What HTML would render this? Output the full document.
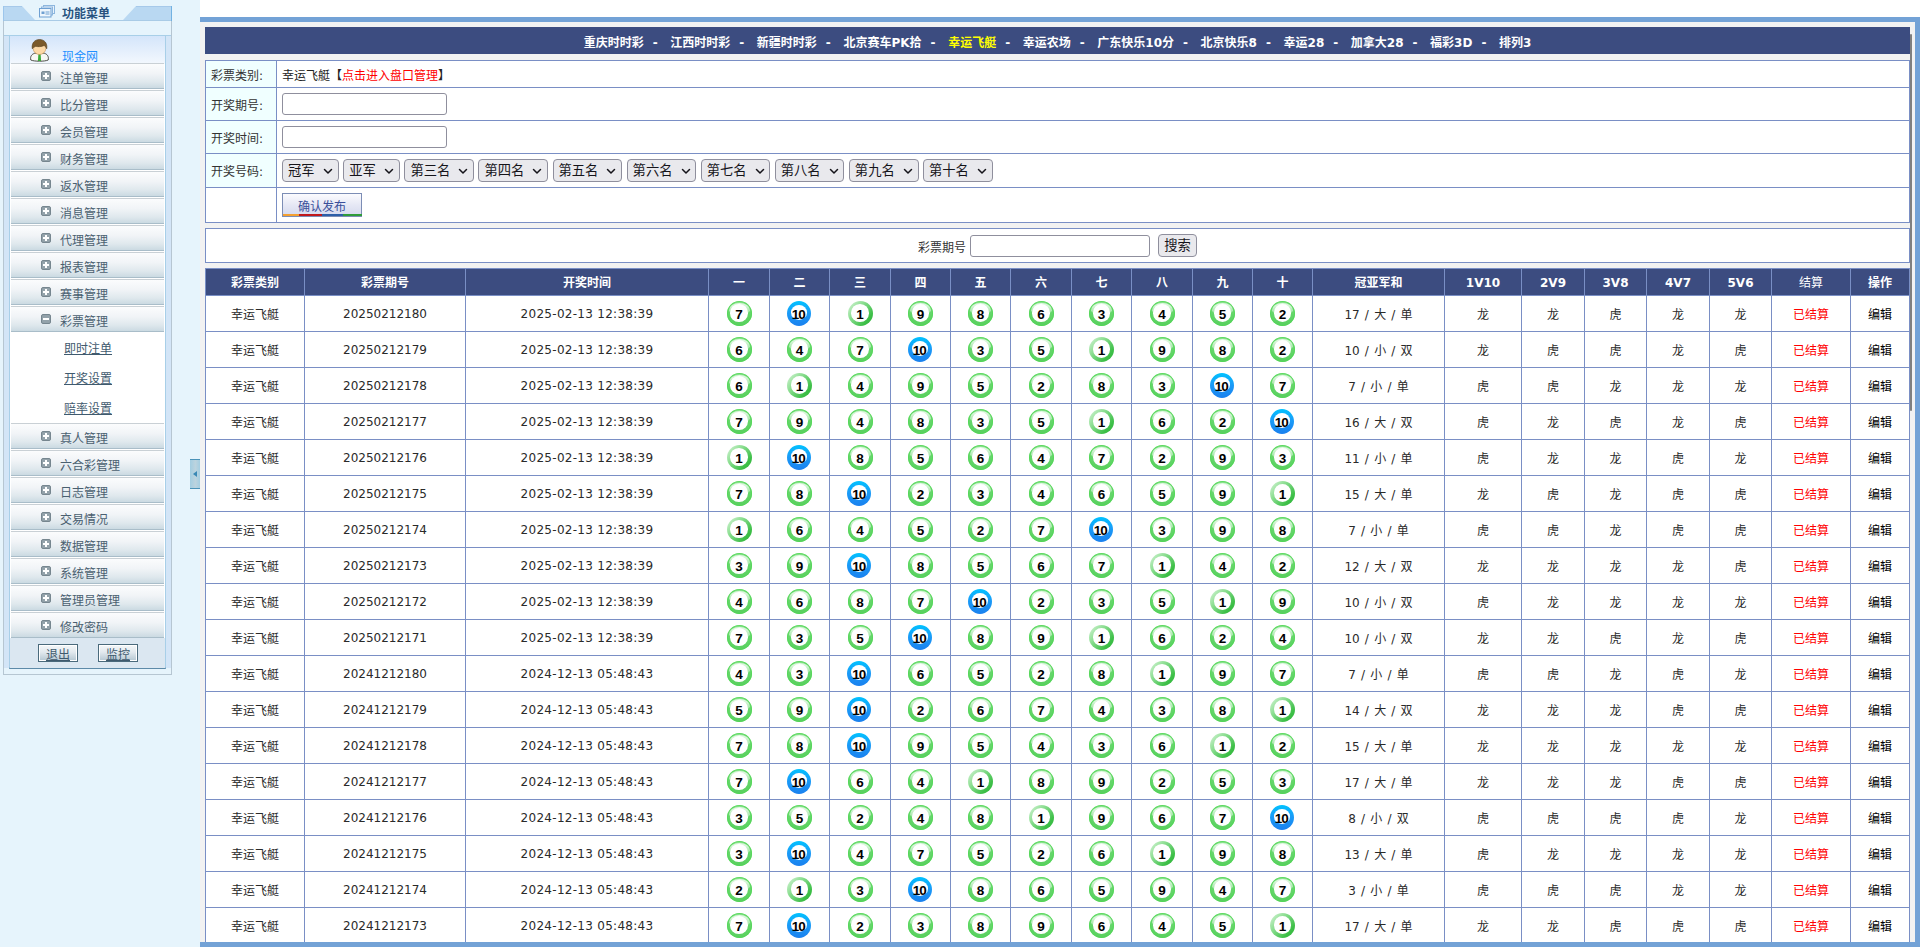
<!DOCTYPE html>
<html lang="zh-CN">
<head>
<meta charset="utf-8">
<title>开奖设置 - 幸运飞艇</title>
<style>
*{box-sizing:border-box;}
html,body{margin:0;padding:0;}
body{width:1920px;height:947px;overflow:hidden;background:#fff;position:relative;
 font-family:"DejaVu Sans","Liberation Sans","Noto Sans CJK SC",sans-serif;font-size:12px;color:#222;}
a{text-decoration:none;color:inherit;}
i{font-style:normal;}
/* sidebar */
#side{position:absolute;left:0;top:0;width:200px;height:947px;background:#e6f4fc;}
#panel{position:absolute;left:3px;top:20px;width:169px;height:655px;border:1px solid #b6c6d2;border-top:none;}
#tab{position:absolute;left:3px;top:6px;}
.ticon{position:absolute;left:39px;top:5px;}
#ttl{position:absolute;left:62px;top:5.5px;font-size:12px;line-height:17px;color:#27527f;font-weight:bold;}
#stripl,#stripr{position:absolute;top:35px;width:6px;height:633px;background:#d3e5f7;border-top:1px solid #a9cfe8;}
#stripl{left:4px;}
#stripr{left:166px;width:5px;}
#pin{position:absolute;left:9px;top:35px;width:157px;height:634px;border:1px solid #a8cfe8;border-bottom:2px solid #5d8aa8;background:#fff;}
#user{position:absolute;left:0;top:0;width:155px;height:28px;background:linear-gradient(#d4e5fa,#f3f8fe);}
.uicon{position:absolute;left:20px;top:3px;}
.uname{position:absolute;left:52px;top:13px;line-height:17px;color:#1e90ff;font-size:12px;}
.mi{position:absolute;left:1px;width:153px;height:26px;background:linear-gradient(#fbfcfd,#f1f4f7 40%,#dfe8ed 75%,#cbdae2);border-top:1px solid #c9d0d5;border-bottom:1px solid #a9bdc9;}
.mi span{position:absolute;left:49px;top:7px;line-height:17px;color:#4a6070;font-size:12px;}
.pm{position:absolute;left:30px;top:7px;width:10px;height:10px;border-radius:2px;background:#93a2aa;border:1px solid #76868f;}
.pm:before{content:"";position:absolute;left:1px;top:3px;width:6px;height:2px;background:#fff;}
.pm:after{content:"";position:absolute;left:3px;top:1px;width:2px;height:6px;background:#fff;}
.pm.minus:after{display:none;}
.sub{position:absolute;left:1px;width:153px;height:90px;background:#fff;}
.sub a{display:block;position:relative;top:1px;height:30px;line-height:30px;padding-left:53px;color:#3f5a6e;text-decoration:underline;}
#btns{position:absolute;left:0;width:155px;height:30px;background:#dbe7f1;}
.sb{position:absolute;top:6px;width:40px;height:18px;border:1px solid #4a6a7c;box-shadow:inset 0 0 0 1px #fff;background:linear-gradient(#f4f7f9,#e2e9ee 45%,#b4c6d1);text-align:center;line-height:20px;text-decoration:underline;color:#3f5a6e;}
.sb:nth-child(1){left:28px;}
.sb:nth-child(2){left:88px;}
#handle{position:absolute;left:190px;top:459px;width:10px;height:30px;background:linear-gradient(90deg,#a3cde1,#bcd3de 55%,#a3cde1);border-top:1px solid #4a92b8;border-bottom:1px solid #4a92b8;}
#handle i{position:absolute;left:2.500px;top:10.500px;width:0;height:0;border-right:4px solid #3a88b5;border-top:3.500px solid transparent;border-bottom:3.500px solid transparent;}
/* main */
#main{position:absolute;left:200px;top:17px;width:1720px;height:930px;background:#f2f2f2;border-top:5px solid #73a2d6;border-right:5px solid #73a2d6;border-bottom:5px solid #73a2d6;overflow:hidden;}
#nav{position:absolute;left:5px;top:5px;width:1705px;height:27px;overflow:hidden;background:#3c4c80;color:#fff;font-weight:bold;text-align:center;line-height:32px;font-size:12px;white-space:nowrap;}
#nav a{color:#fff;}
#nav a.cur{color:#ffff00;}
#nav .sep{margin:0 12.6px 0 9px;}
#form{position:absolute;left:5px;top:38px;width:1705px;border-collapse:separate;border-spacing:0;border-right:1px solid #7a8fc5;border-bottom:1px solid #7a8fc5;background:#fff;}
#form th,#form td{border-left:1px solid #7a8fc5;border-top:1px solid #7a8fc5;font-weight:normal;text-align:left;vertical-align:middle;padding:0;}
#form th{width:71px;background:#f0ffff;padding-left:5px;color:#333;}
#form th.w{background:#fff;}
#form td{padding-left:5px;color:#222;}
#form .r1 td,#form .r1 th{height:27px;}
#form .r2 td,#form .r3 td{height:33px;}
#form .r4 td{height:34px;}
#form .r5 td{height:35px;}
.red{color:#f00;}
.inp{display:inline-block;width:165px;height:22px;border:1px solid #8f8f9d;border-radius:3px;background:#fff;vertical-align:middle;}
.sel{display:inline-block;position:relative;height:23px;line-height:22.5px;border:1px solid #8f8f9d;border-radius:4px;background:#e9e9ed;color:#15141a;font-size:13.3px;padding-left:5px;margin-right:4.4px;vertical-align:middle;}
.sel.s2{width:56.8px;}
.sel.s3{width:69.7px;}
.sel svg{position:absolute;right:4.8px;top:8px;}
.okbtn{display:inline-block;position:relative;width:80px;height:24px;border:1px solid #7c8db5;background:linear-gradient(#fbfbfe,#e6e8f5 50%,#d4d9ee);color:#3a4f9a;text-align:center;line-height:26px;vertical-align:middle;}
.okbtn i{position:absolute;bottom:0;height:2px;}
.okbtn .c1{left:0;width:16px;background:#f4a030;}
.okbtn .c2{left:16px;width:23px;background:#c0181c;}
.okbtn .c3{left:39px;width:21px;background:#2d5fa8;}
.okbtn .c4{left:60px;width:19px;background:#2f9c3a;}
#search{position:absolute;left:5px;top:206px;width:1705px;height:35px;background:#fff;border:1px solid #7a8fc5;}
#search .lbl{position:absolute;left:712px;top:9px;color:#333;}
#search .sinp{position:absolute;left:764px;top:6px;width:180px;height:22px;}
.gbtn{position:absolute;left:952px;top:5px;width:39px;height:23px;border:1px solid #8f8f9d;border-radius:4px;background:#e9e9ed;color:#15141a;font-size:13.3px;text-align:center;line-height:22.5px;}
#data{position:absolute;left:5px;top:246px;width:1705px;table-layout:fixed;border-collapse:separate;border-spacing:0;border-right:1px solid #7a8fc5;background:#fff;}
#data th,#data td{border-left:1px solid #7a8fc5;border-top:1px solid #7a8fc5;text-align:center;vertical-align:middle;padding:0;white-space:nowrap;overflow:hidden;}
#data th{height:27px;background:#3c4c80;color:#fff;font-weight:bold;font-size:12px;}
#data th.thin{font-weight:normal;}
#data th{padding-bottom:1px;}
#data th.lat{padding-top:2px;padding-bottom:0;}
#data td{height:36px;color:#2a2a2a;font-weight:normal;}
#data td.tm{letter-spacing:.28px;}
#data td.sm{word-spacing:1.4px;}
#data td:last-child{color:#000;}
.ball{display:inline-block;position:relative;width:25px;height:25px;border-radius:50%;vertical-align:middle;background:linear-gradient(#8fe592 0%,#66d76b 45%,#58cf5e 100%);box-shadow:inset 0 0 0 1px rgba(80,215,84,.75);}
.ball:after{content:"";position:absolute;left:2px;top:1.5px;width:21px;height:12px;border-radius:50%/60% 60% 40% 40%;background:linear-gradient(rgba(255,255,255,.8),rgba(255,255,255,.25));}
.ball:before{content:"";position:absolute;left:3.7px;top:3.3px;width:17.6px;height:17.4px;border-radius:50%;background:#fff;z-index:1;}
.ball b{position:absolute;left:0;top:.5px;width:25px;height:25px;line-height:25.5px;text-align:center;font-family:"Liberation Sans",sans-serif;font-size:13.5px;color:#000;font-weight:bold;z-index:2;}
.ball.b1{background:linear-gradient(130deg,#d9f5da 0%,#8fdf94 35%,#3fc049 75%,#2db338 100%);box-shadow:none;}
.ball.b1:after{display:none;}
.ball.b10{width:24px;left:-.75px;background:linear-gradient(#00c2ff 0%,#1a9cf8 45%,#1a80ee 100%);box-shadow:none;}
.ball.b10:after{display:none;}
.ball.b10:before{left:4.2px;top:4.4px;width:15.6px;height:14.6px;}
.ball.b10 b{width:24px;letter-spacing:-.9px;text-indent:-.9px;}
#scroll{position:absolute;left:1710px;top:12px;width:2px;height:377px;background:#7f7f7f;border-radius:1px;}
</style>
</head>
<body>
<div id="side">
<div id="panel"></div>
<svg id="tab" width="169" height="15" viewBox="0 0 169 15"><path d="M0 0H19L32 14H0z" fill="#b9d8f2"/><path d="M133 0H169V14H120z" fill="#b9d8f2"/><path d="M0 .5H19M133 .5H169" stroke="#a6c9ea" stroke-width="1" fill="none"/><path d="M0 14.500H169" stroke="#a9cbe6" stroke-width="1"/><path d="M168.500 0V15" stroke="#72b2e2" stroke-width="1"/><path d="M.5 0V15" stroke="#9cc6ec" stroke-width="1"/></svg>
<svg class="ticon" width="16" height="13" viewBox="0 0 16 13"><rect x="4.500" y=".5" width="11" height="8" fill="#e9f3fc" stroke="#8db6de"/><rect x="2.500" y="2" width="11" height="8" fill="#e9f3fc" stroke="#8db6de"/><rect x=".5" y="3.500" width="11.500" height="8.500" fill="#eef6fd" stroke="#6fa0d2"/><rect x="2.500" y="6.500" width="3" height="2.500" fill="#6fa0d2"/><rect x="6.500" y="6.500" width="4" height="1" fill="#6fa0d2"/><rect x="6.500" y="8.500" width="4" height="1" fill="#6fa0d2"/></svg><b id="ttl">功能菜单</b>
<div id="stripl"></div><div id="stripr"></div>
<div id="pin">
<div id="user"><svg class="uicon" width="19" height="23" viewBox="0 0 19 23"><path d="M.8 21c-.8-3.400.8-5.800 4-6.800h9.400c3.200 1 4.800 3.400 4 6.800-3 1.600-14.400 1.600-17.400 0z" fill="#f7f8f4" stroke="#4d4e47" stroke-width="1"/><path d="M8.500 14h2l.6 8H7.900z" fill="#38a935"/><ellipse cx="9.500" cy="9.500" rx="6.300" ry="6" fill="#fdd9a6" stroke="#c39052" stroke-width=".6"/><path d="M2.300 9.800C1.300 4 4.800.5 9.500.5s8.200 3.500 7.200 9.300c-.6-1.600-1.400-2.700-2.600-3.300-2.600 1.300-6.300 1.400-8.300.8-1.500.6-2.700 1.300-3.500 2.500z" fill="#7b5a2a" stroke="#513a18" stroke-width=".6"/></svg><span class="uname">现金网</span></div>
<div class="mi" style="top:27px"><i class="pm"></i><span>注单管理</span></div>
<div class="mi" style="top:54px"><i class="pm"></i><span>比分管理</span></div>
<div class="mi" style="top:81px"><i class="pm"></i><span>会员管理</span></div>
<div class="mi" style="top:108px"><i class="pm"></i><span>财务管理</span></div>
<div class="mi" style="top:135px"><i class="pm"></i><span>返水管理</span></div>
<div class="mi" style="top:162px"><i class="pm"></i><span>消息管理</span></div>
<div class="mi" style="top:189px"><i class="pm"></i><span>代理管理</span></div>
<div class="mi" style="top:216px"><i class="pm"></i><span>报表管理</span></div>
<div class="mi" style="top:243px"><i class="pm"></i><span>赛事管理</span></div>
<div class="mi" style="top:270px"><i class="pm minus"></i><span>彩票管理</span></div>
<div class="sub" style="top:297px"><a>即时注单</a><a>开奖设置</a><a>赔率设置</a></div>
<div class="mi" style="top:387px"><i class="pm"></i><span>真人管理</span></div>
<div class="mi" style="top:414px"><i class="pm"></i><span>六合彩管理</span></div>
<div class="mi" style="top:441px"><i class="pm"></i><span>日志管理</span></div>
<div class="mi" style="top:468px"><i class="pm"></i><span>交易情况</span></div>
<div class="mi" style="top:495px"><i class="pm"></i><span>数据管理</span></div>
<div class="mi" style="top:522px"><i class="pm"></i><span>系统管理</span></div>
<div class="mi" style="top:549px"><i class="pm"></i><span>管理员管理</span></div>
<div class="mi" style="top:576px"><i class="pm"></i><span>修改密码</span></div>
<div id="btns" style="top:602px"><span class="sb">退出</span><span class="sb">监控</span></div>
</div>
<div id="handle"><i></i></div>
</div>
<div id="main">
<div id="nav"><a>重庆时时彩</a><span class="sep">-</span><a>江西时时彩</a><span class="sep">-</span><a>新疆时时彩</a><span class="sep">-</span><a>北京赛车PK拾</a><span class="sep">-</span><a class="cur">幸运飞艇</a><span class="sep">-</span><a>幸运农场</a><span class="sep">-</span><a>广东快乐10分</a><span class="sep">-</span><a>北京快乐8</a><span class="sep">-</span><a>幸运28</a><span class="sep">-</span><a>加拿大28</a><span class="sep">-</span><a>福彩3D</a><span class="sep">-</span><a>排列3</a></div>
<table id="form" cellspacing="0" cellpadding="0">
<tr class="r1"><th>彩票类别:</th><td>幸运飞艇<span class="bk">【</span><a class="red">点击进入盘口管理</a><span class="bk2">】</span></td></tr>
<tr class="r2"><th>开奖期号:</th><td><span class="inp"></span></td></tr>
<tr class="r3"><th>开奖时间:</th><td><span class="inp"></span></td></tr>
<tr class="r4"><th>开奖号码:</th><td><span class="sel s2">冠军<svg width="10" height="7" viewBox="0 0 10 7"><path d="M1.500 1.500 5 5l3.500-3.500" fill="none" stroke="#15141a" stroke-width="1.500" stroke-linecap="round" stroke-linejoin="round"/></svg></span><span class="sel s2">亚军<svg width="10" height="7" viewBox="0 0 10 7"><path d="M1.500 1.500 5 5l3.500-3.500" fill="none" stroke="#15141a" stroke-width="1.500" stroke-linecap="round" stroke-linejoin="round"/></svg></span><span class="sel s3">第三名<svg width="10" height="7" viewBox="0 0 10 7"><path d="M1.500 1.500 5 5l3.500-3.500" fill="none" stroke="#15141a" stroke-width="1.500" stroke-linecap="round" stroke-linejoin="round"/></svg></span><span class="sel s3">第四名<svg width="10" height="7" viewBox="0 0 10 7"><path d="M1.500 1.500 5 5l3.500-3.500" fill="none" stroke="#15141a" stroke-width="1.500" stroke-linecap="round" stroke-linejoin="round"/></svg></span><span class="sel s3">第五名<svg width="10" height="7" viewBox="0 0 10 7"><path d="M1.500 1.500 5 5l3.500-3.500" fill="none" stroke="#15141a" stroke-width="1.500" stroke-linecap="round" stroke-linejoin="round"/></svg></span><span class="sel s3">第六名<svg width="10" height="7" viewBox="0 0 10 7"><path d="M1.500 1.500 5 5l3.500-3.500" fill="none" stroke="#15141a" stroke-width="1.500" stroke-linecap="round" stroke-linejoin="round"/></svg></span><span class="sel s3">第七名<svg width="10" height="7" viewBox="0 0 10 7"><path d="M1.500 1.500 5 5l3.500-3.500" fill="none" stroke="#15141a" stroke-width="1.500" stroke-linecap="round" stroke-linejoin="round"/></svg></span><span class="sel s3">第八名<svg width="10" height="7" viewBox="0 0 10 7"><path d="M1.500 1.500 5 5l3.500-3.500" fill="none" stroke="#15141a" stroke-width="1.500" stroke-linecap="round" stroke-linejoin="round"/></svg></span><span class="sel s3">第九名<svg width="10" height="7" viewBox="0 0 10 7"><path d="M1.500 1.500 5 5l3.500-3.500" fill="none" stroke="#15141a" stroke-width="1.500" stroke-linecap="round" stroke-linejoin="round"/></svg></span><span class="sel s3">第十名<svg width="10" height="7" viewBox="0 0 10 7"><path d="M1.500 1.500 5 5l3.500-3.500" fill="none" stroke="#15141a" stroke-width="1.500" stroke-linecap="round" stroke-linejoin="round"/></svg></span></td></tr>
<tr class="r5"><th class="w"></th><td><span class="okbtn"><i class="c1"></i><i class="c2"></i><i class="c3"></i><i class="c4"></i>确认发布</span></td></tr>
</table>
<div id="search"><span class="lbl">彩票期号</span><span class="inp sinp"></span><span class="gbtn">搜索</span></div>
<table id="data" cellspacing="0" cellpadding="0">
<colgroup><col style="width:99px"><col style="width:161px"><col style="width:243px"><col style="width:61px"><col style="width:60px"><col style="width:61px"><col style="width:60px"><col style="width:60px"><col style="width:61px"><col style="width:60px"><col style="width:61px"><col style="width:60px"><col style="width:60px"><col style="width:132px"><col style="width:77px"><col style="width:63px"><col style="width:62px"><col style="width:63px"><col style="width:62px"><col style="width:79px"><col style="width:59px"></colgroup>
<tr class="hd"><th>彩票类别</th><th>彩票期号</th><th>开奖时间</th><th>一</th><th>二</th><th>三</th><th>四</th><th>五</th><th>六</th><th>七</th><th>八</th><th>九</th><th>十</th><th>冠亚军和</th><th class="lat">1V10</th><th class="lat">2V9</th><th class="lat">3V8</th><th class="lat">4V7</th><th class="lat">5V6</th><th class="thin">结算</th><th>操作</th></tr>
<tr><td>幸运飞艇</td><td>20250212180</td><td class="tm">2025-02-13 12:38:39</td><td><span class="ball "><b>7</b></span></td><td><span class="ball b10"><b>10</b></span></td><td><span class="ball b1"><b>1</b></span></td><td><span class="ball "><b>9</b></span></td><td><span class="ball "><b>8</b></span></td><td><span class="ball "><b>6</b></span></td><td><span class="ball "><b>3</b></span></td><td><span class="ball "><b>4</b></span></td><td><span class="ball "><b>5</b></span></td><td><span class="ball "><b>2</b></span></td><td class="sm">17 / 大 / 单</td><td>龙</td><td>龙</td><td>虎</td><td>龙</td><td>龙</td><td><span class="red">已结算</span></td><td>编辑</td></tr>
<tr><td>幸运飞艇</td><td>20250212179</td><td class="tm">2025-02-13 12:38:39</td><td><span class="ball "><b>6</b></span></td><td><span class="ball "><b>4</b></span></td><td><span class="ball "><b>7</b></span></td><td><span class="ball b10"><b>10</b></span></td><td><span class="ball "><b>3</b></span></td><td><span class="ball "><b>5</b></span></td><td><span class="ball b1"><b>1</b></span></td><td><span class="ball "><b>9</b></span></td><td><span class="ball "><b>8</b></span></td><td><span class="ball "><b>2</b></span></td><td class="sm">10 / 小 / 双</td><td>龙</td><td>虎</td><td>虎</td><td>龙</td><td>虎</td><td><span class="red">已结算</span></td><td>编辑</td></tr>
<tr><td>幸运飞艇</td><td>20250212178</td><td class="tm">2025-02-13 12:38:39</td><td><span class="ball "><b>6</b></span></td><td><span class="ball b1"><b>1</b></span></td><td><span class="ball "><b>4</b></span></td><td><span class="ball "><b>9</b></span></td><td><span class="ball "><b>5</b></span></td><td><span class="ball "><b>2</b></span></td><td><span class="ball "><b>8</b></span></td><td><span class="ball "><b>3</b></span></td><td><span class="ball b10"><b>10</b></span></td><td><span class="ball "><b>7</b></span></td><td class="sm">7 / 小 / 单</td><td>虎</td><td>虎</td><td>龙</td><td>龙</td><td>龙</td><td><span class="red">已结算</span></td><td>编辑</td></tr>
<tr><td>幸运飞艇</td><td>20250212177</td><td class="tm">2025-02-13 12:38:39</td><td><span class="ball "><b>7</b></span></td><td><span class="ball "><b>9</b></span></td><td><span class="ball "><b>4</b></span></td><td><span class="ball "><b>8</b></span></td><td><span class="ball "><b>3</b></span></td><td><span class="ball "><b>5</b></span></td><td><span class="ball b1"><b>1</b></span></td><td><span class="ball "><b>6</b></span></td><td><span class="ball "><b>2</b></span></td><td><span class="ball b10"><b>10</b></span></td><td class="sm">16 / 大 / 双</td><td>虎</td><td>龙</td><td>虎</td><td>龙</td><td>虎</td><td><span class="red">已结算</span></td><td>编辑</td></tr>
<tr><td>幸运飞艇</td><td>20250212176</td><td class="tm">2025-02-13 12:38:39</td><td><span class="ball b1"><b>1</b></span></td><td><span class="ball b10"><b>10</b></span></td><td><span class="ball "><b>8</b></span></td><td><span class="ball "><b>5</b></span></td><td><span class="ball "><b>6</b></span></td><td><span class="ball "><b>4</b></span></td><td><span class="ball "><b>7</b></span></td><td><span class="ball "><b>2</b></span></td><td><span class="ball "><b>9</b></span></td><td><span class="ball "><b>3</b></span></td><td class="sm">11 / 小 / 单</td><td>虎</td><td>龙</td><td>龙</td><td>虎</td><td>龙</td><td><span class="red">已结算</span></td><td>编辑</td></tr>
<tr><td>幸运飞艇</td><td>20250212175</td><td class="tm">2025-02-13 12:38:39</td><td><span class="ball "><b>7</b></span></td><td><span class="ball "><b>8</b></span></td><td><span class="ball b10"><b>10</b></span></td><td><span class="ball "><b>2</b></span></td><td><span class="ball "><b>3</b></span></td><td><span class="ball "><b>4</b></span></td><td><span class="ball "><b>6</b></span></td><td><span class="ball "><b>5</b></span></td><td><span class="ball "><b>9</b></span></td><td><span class="ball b1"><b>1</b></span></td><td class="sm">15 / 大 / 单</td><td>龙</td><td>虎</td><td>龙</td><td>虎</td><td>虎</td><td><span class="red">已结算</span></td><td>编辑</td></tr>
<tr><td>幸运飞艇</td><td>20250212174</td><td class="tm">2025-02-13 12:38:39</td><td><span class="ball b1"><b>1</b></span></td><td><span class="ball "><b>6</b></span></td><td><span class="ball "><b>4</b></span></td><td><span class="ball "><b>5</b></span></td><td><span class="ball "><b>2</b></span></td><td><span class="ball "><b>7</b></span></td><td><span class="ball b10"><b>10</b></span></td><td><span class="ball "><b>3</b></span></td><td><span class="ball "><b>9</b></span></td><td><span class="ball "><b>8</b></span></td><td class="sm">7 / 小 / 单</td><td>虎</td><td>虎</td><td>龙</td><td>虎</td><td>虎</td><td><span class="red">已结算</span></td><td>编辑</td></tr>
<tr><td>幸运飞艇</td><td>20250212173</td><td class="tm">2025-02-13 12:38:39</td><td><span class="ball "><b>3</b></span></td><td><span class="ball "><b>9</b></span></td><td><span class="ball b10"><b>10</b></span></td><td><span class="ball "><b>8</b></span></td><td><span class="ball "><b>5</b></span></td><td><span class="ball "><b>6</b></span></td><td><span class="ball "><b>7</b></span></td><td><span class="ball b1"><b>1</b></span></td><td><span class="ball "><b>4</b></span></td><td><span class="ball "><b>2</b></span></td><td class="sm">12 / 大 / 双</td><td>龙</td><td>龙</td><td>龙</td><td>龙</td><td>虎</td><td><span class="red">已结算</span></td><td>编辑</td></tr>
<tr><td>幸运飞艇</td><td>20250212172</td><td class="tm">2025-02-13 12:38:39</td><td><span class="ball "><b>4</b></span></td><td><span class="ball "><b>6</b></span></td><td><span class="ball "><b>8</b></span></td><td><span class="ball "><b>7</b></span></td><td><span class="ball b10"><b>10</b></span></td><td><span class="ball "><b>2</b></span></td><td><span class="ball "><b>3</b></span></td><td><span class="ball "><b>5</b></span></td><td><span class="ball b1"><b>1</b></span></td><td><span class="ball "><b>9</b></span></td><td class="sm">10 / 小 / 双</td><td>虎</td><td>龙</td><td>龙</td><td>龙</td><td>龙</td><td><span class="red">已结算</span></td><td>编辑</td></tr>
<tr><td>幸运飞艇</td><td>20250212171</td><td class="tm">2025-02-13 12:38:39</td><td><span class="ball "><b>7</b></span></td><td><span class="ball "><b>3</b></span></td><td><span class="ball "><b>5</b></span></td><td><span class="ball b10"><b>10</b></span></td><td><span class="ball "><b>8</b></span></td><td><span class="ball "><b>9</b></span></td><td><span class="ball b1"><b>1</b></span></td><td><span class="ball "><b>6</b></span></td><td><span class="ball "><b>2</b></span></td><td><span class="ball "><b>4</b></span></td><td class="sm">10 / 小 / 双</td><td>龙</td><td>龙</td><td>虎</td><td>龙</td><td>虎</td><td><span class="red">已结算</span></td><td>编辑</td></tr>
<tr><td>幸运飞艇</td><td>20241212180</td><td class="tm">2024-12-13 05:48:43</td><td><span class="ball "><b>4</b></span></td><td><span class="ball "><b>3</b></span></td><td><span class="ball b10"><b>10</b></span></td><td><span class="ball "><b>6</b></span></td><td><span class="ball "><b>5</b></span></td><td><span class="ball "><b>2</b></span></td><td><span class="ball "><b>8</b></span></td><td><span class="ball b1"><b>1</b></span></td><td><span class="ball "><b>9</b></span></td><td><span class="ball "><b>7</b></span></td><td class="sm">7 / 小 / 单</td><td>虎</td><td>虎</td><td>龙</td><td>虎</td><td>龙</td><td><span class="red">已结算</span></td><td>编辑</td></tr>
<tr><td>幸运飞艇</td><td>20241212179</td><td class="tm">2024-12-13 05:48:43</td><td><span class="ball "><b>5</b></span></td><td><span class="ball "><b>9</b></span></td><td><span class="ball b10"><b>10</b></span></td><td><span class="ball "><b>2</b></span></td><td><span class="ball "><b>6</b></span></td><td><span class="ball "><b>7</b></span></td><td><span class="ball "><b>4</b></span></td><td><span class="ball "><b>3</b></span></td><td><span class="ball "><b>8</b></span></td><td><span class="ball b1"><b>1</b></span></td><td class="sm">14 / 大 / 双</td><td>龙</td><td>龙</td><td>龙</td><td>虎</td><td>虎</td><td><span class="red">已结算</span></td><td>编辑</td></tr>
<tr><td>幸运飞艇</td><td>20241212178</td><td class="tm">2024-12-13 05:48:43</td><td><span class="ball "><b>7</b></span></td><td><span class="ball "><b>8</b></span></td><td><span class="ball b10"><b>10</b></span></td><td><span class="ball "><b>9</b></span></td><td><span class="ball "><b>5</b></span></td><td><span class="ball "><b>4</b></span></td><td><span class="ball "><b>3</b></span></td><td><span class="ball "><b>6</b></span></td><td><span class="ball b1"><b>1</b></span></td><td><span class="ball "><b>2</b></span></td><td class="sm">15 / 大 / 单</td><td>龙</td><td>龙</td><td>龙</td><td>龙</td><td>龙</td><td><span class="red">已结算</span></td><td>编辑</td></tr>
<tr><td>幸运飞艇</td><td>20241212177</td><td class="tm">2024-12-13 05:48:43</td><td><span class="ball "><b>7</b></span></td><td><span class="ball b10"><b>10</b></span></td><td><span class="ball "><b>6</b></span></td><td><span class="ball "><b>4</b></span></td><td><span class="ball b1"><b>1</b></span></td><td><span class="ball "><b>8</b></span></td><td><span class="ball "><b>9</b></span></td><td><span class="ball "><b>2</b></span></td><td><span class="ball "><b>5</b></span></td><td><span class="ball "><b>3</b></span></td><td class="sm">17 / 大 / 单</td><td>龙</td><td>龙</td><td>龙</td><td>虎</td><td>虎</td><td><span class="red">已结算</span></td><td>编辑</td></tr>
<tr><td>幸运飞艇</td><td>20241212176</td><td class="tm">2024-12-13 05:48:43</td><td><span class="ball "><b>3</b></span></td><td><span class="ball "><b>5</b></span></td><td><span class="ball "><b>2</b></span></td><td><span class="ball "><b>4</b></span></td><td><span class="ball "><b>8</b></span></td><td><span class="ball b1"><b>1</b></span></td><td><span class="ball "><b>9</b></span></td><td><span class="ball "><b>6</b></span></td><td><span class="ball "><b>7</b></span></td><td><span class="ball b10"><b>10</b></span></td><td class="sm">8 / 小 / 双</td><td>虎</td><td>虎</td><td>虎</td><td>虎</td><td>龙</td><td><span class="red">已结算</span></td><td>编辑</td></tr>
<tr><td>幸运飞艇</td><td>20241212175</td><td class="tm">2024-12-13 05:48:43</td><td><span class="ball "><b>3</b></span></td><td><span class="ball b10"><b>10</b></span></td><td><span class="ball "><b>4</b></span></td><td><span class="ball "><b>7</b></span></td><td><span class="ball "><b>5</b></span></td><td><span class="ball "><b>2</b></span></td><td><span class="ball "><b>6</b></span></td><td><span class="ball b1"><b>1</b></span></td><td><span class="ball "><b>9</b></span></td><td><span class="ball "><b>8</b></span></td><td class="sm">13 / 大 / 单</td><td>虎</td><td>龙</td><td>龙</td><td>龙</td><td>龙</td><td><span class="red">已结算</span></td><td>编辑</td></tr>
<tr><td>幸运飞艇</td><td>20241212174</td><td class="tm">2024-12-13 05:48:43</td><td><span class="ball "><b>2</b></span></td><td><span class="ball b1"><b>1</b></span></td><td><span class="ball "><b>3</b></span></td><td><span class="ball b10"><b>10</b></span></td><td><span class="ball "><b>8</b></span></td><td><span class="ball "><b>6</b></span></td><td><span class="ball "><b>5</b></span></td><td><span class="ball "><b>9</b></span></td><td><span class="ball "><b>4</b></span></td><td><span class="ball "><b>7</b></span></td><td class="sm">3 / 小 / 单</td><td>虎</td><td>虎</td><td>虎</td><td>龙</td><td>龙</td><td><span class="red">已结算</span></td><td>编辑</td></tr>
<tr><td>幸运飞艇</td><td>20241212173</td><td class="tm">2024-12-13 05:48:43</td><td><span class="ball "><b>7</b></span></td><td><span class="ball b10"><b>10</b></span></td><td><span class="ball "><b>2</b></span></td><td><span class="ball "><b>3</b></span></td><td><span class="ball "><b>8</b></span></td><td><span class="ball "><b>9</b></span></td><td><span class="ball "><b>6</b></span></td><td><span class="ball "><b>4</b></span></td><td><span class="ball "><b>5</b></span></td><td><span class="ball b1"><b>1</b></span></td><td class="sm">17 / 大 / 单</td><td>龙</td><td>龙</td><td>虎</td><td>虎</td><td>虎</td><td><span class="red">已结算</span></td><td>编辑</td></tr>
</table>
<div id="scroll"></div>
</div>
</body>
</html>
